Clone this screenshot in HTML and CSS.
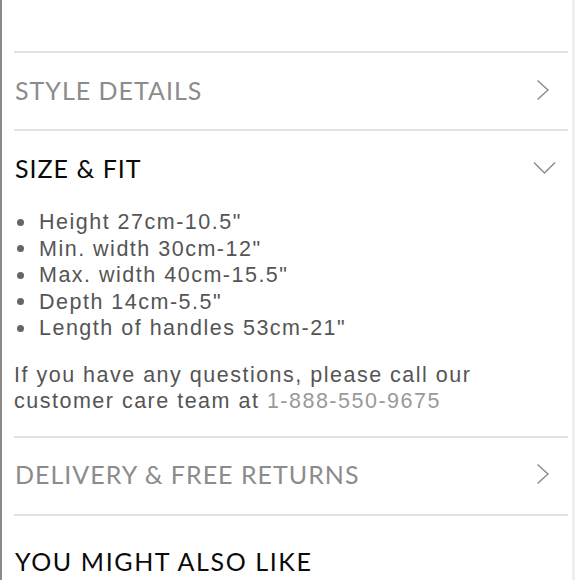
FILE: index.html
```html
<!DOCTYPE html>
<html>
<head>
<meta charset="utf-8">
<link rel="stylesheet" href="styles.css">
</head>
<body>
<div class="page">
  <main class="content">
    <section class="acc">
      <div class="acc-head">
        <h2 class="acc-title muted">STYLE DETAILS</h2>
        <svg class="chev" width="14" height="22" viewBox="0 0 14 22"><path d="M1.5 1.5 L12 11 L1.5 20.5" fill="none" stroke="#8a8a8a" stroke-width="1.4"/></svg>
      </div>
    </section>
    <section class="acc open">
      <div class="acc-head">
        <h2 class="acc-title">SIZE &amp; FIT</h2>
        <svg class="chev-down" width="23" height="14" viewBox="0 0 23 14"><path d="M1 1.5 L11.5 12 L22 1.5" fill="none" stroke="#8a8a8a" stroke-width="1.4"/></svg>
      </div>
      <div class="acc-body">
        <ul class="specs">
          <li>Height 27cm-10.5"</li>
          <li>Min. width 30cm-12"</li>
          <li>Max. width 40cm-15.5"</li>
          <li>Depth 14cm-5.5"</li>
          <li>Length of handles 53cm-21"</li>
        </ul>
        <p class="note">If you have any questions, please call our customer care team at <span class="phone">1-888-550-9675</span></p>
      </div>
    </section>
    <section class="acc">
      <div class="acc-head">
        <h2 class="acc-title muted">DELIVERY &amp; FREE RETURNS</h2>
        <svg class="chev" width="14" height="22" viewBox="0 0 14 22"><path d="M1.5 1.5 L12 11 L1.5 20.5" fill="none" stroke="#8a8a8a" stroke-width="1.4"/></svg>
      </div>
    </section>
    <section class="also">
      <h2 class="acc-title wide">YOU MIGHT ALSO LIKE</h2>
    </section>
  </main>
</div>
</body>
</html>
```
FILE: styles.css
```css
* { box-sizing: border-box; }
html, body { margin: 0; padding: 0; background: #fff; }
body { height: 580px; overflow: hidden; }
.page {
  width: 575px;
  height: 580px;
  border-left: 2px solid #8a8a8a;
  border-right: 3px solid #eeeeee;
  padding: 51px 4px 0 12px;
}
.content { display: flex; flex-direction: column; }
.acc { border-top: 2px solid #e2e2e2; }
.acc-head {
  height: 76px;
  display: flex;
  align-items: center;
  justify-content: space-between;
  padding-right: 18px;
  padding-bottom: 3px;
}
.acc.open .acc-head { padding-right: 12px; }
.acc-title {
  margin: 0;
  font-family: "Lato", "Liberation Sans", sans-serif;
  font-weight: 400;
  font-size: 25px;
  letter-spacing: 1px;
  color: #0a0a0a;
  padding-left: 1px;
}
.acc-title.wide { letter-spacing: 1.6px; }
.acc-title.muted { color: #8c8c8c; }
.chev, .chev-down { display: block; }
.acc-body {
  padding: 2px 0 22px 0;
  font-family: "Liberation Sans", Arial, sans-serif;
  font-size: 21.5px;
  letter-spacing: 1.5px;
  color: #555;
}
.specs {
  list-style: none;
  margin: 0;
  padding: 0;
}
.specs li {
  display: flex;
  align-items: center;
  line-height: 26.5px;
}
.specs li::before {
  content: "";
  flex: none;
  width: 7px;
  height: 7px;
  border-radius: 50%;
  background: #666;
  margin: 0 15px 0 3px;
}
.note {
  margin: 20px 0 0 0;
  line-height: 26px;
}
.phone { color: #999; }
.also {
  border-top: 2px solid #e2e2e2;
  padding-top: 30px;
}
```
